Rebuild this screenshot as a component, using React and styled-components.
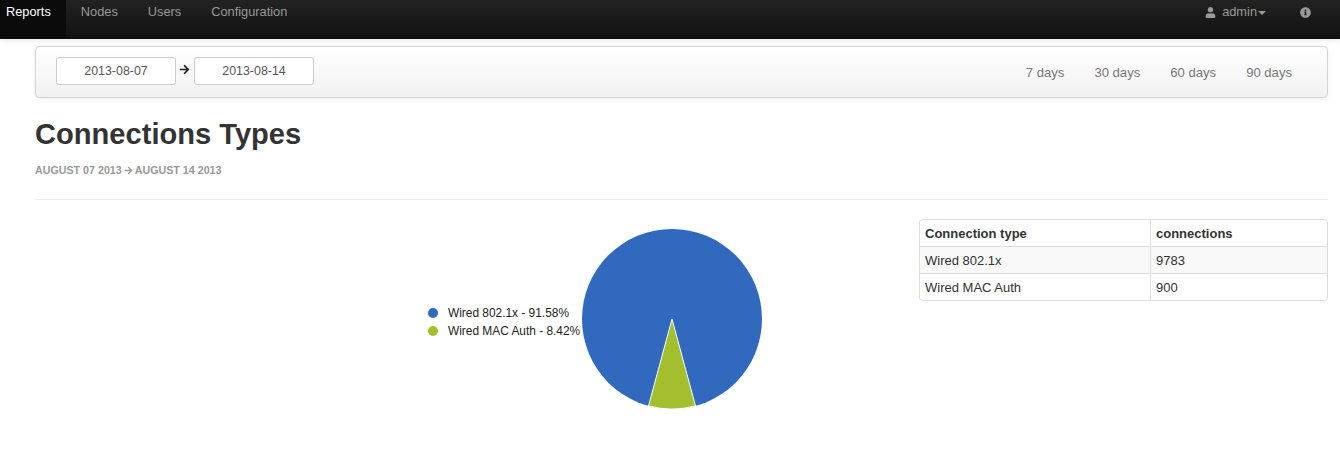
import styled, { createGlobalStyle } from 'styled-components';
import { FaUser, FaInfoCircle, FaArrowRight } from 'react-icons/fa';

const Global = createGlobalStyle`
  html, body {
    margin: 0;
    padding: 0;
    background: #fff;
    font-family: "Liberation Sans", Arial, sans-serif;
    font-size: 13px;
    color: #333;
  }
`

const Navbar = styled.div`
  display: flex;
  justify-content: space-between;
  height: 38px;
  background: linear-gradient(to bottom, #222222, #111111);
  border-bottom: 1px solid #0c0c0c;
  box-shadow: 0 1px 6px rgba(0, 0, 0, 0.1);
`

const NavGroup = styled.div`
  display: flex;
`

const NavLink = styled.a`
  display: flex;
  align-items: flex-start;
  gap: ${(p) => p.$gap || 0}px;
  padding: 4px ${(p) => p.$right || 15}px 0 ${(p) => p.$left || 15}px;
  height: 34px;
  line-height: 16px;
  font-size: 12.8px;
  color: ${(p) => (p.$active ? '#fff' : '#999')};
  background: ${(p) => (p.$active ? '#0b0b0b' : 'transparent')};
`

const NavIcon = styled.span`
  display: flex;
  height: 16px;
  align-items: center;
  font-size: 11px;
  color: #999;
`

const Caret = styled.span`
  width: 0;
  height: 0;
  margin: 7px 0 0 -5px;
  border-left: 4px solid transparent;
  border-right: 4px solid transparent;
  border-top: 4px solid #999;
`

const Page = styled.div`
  padding: 7px 12px 0 35px;
`

const Toolbar = styled.div`
  display: flex;
  align-items: center;
  justify-content: space-between;
  height: 50px;
  padding: 0 35px 0 20px;
  border: 1px solid #d4d4d4;
  border-radius: 4px;
  background: linear-gradient(to bottom, #ffffff, #f2f2f2);
  box-shadow: 0 1px 4px rgba(0, 0, 0, 0.065);
`

const DateRange = styled.div`
  display: flex;
  align-items: center;
  gap: 3px;
  margin-top: -2px;
`

const DateInput = styled.div`
  box-sizing: border-box;
  width: 120px;
  height: 28px;
  line-height: 27px;
  text-align: center;
  font-size: 12.4px;
  color: #555;
  background: #fff;
  border: 1px solid #ccc;
  border-radius: 3px;
`

const ArrowIcon = styled.span`
  display: flex;
  margin: -3px 1px 0 0;
  font-size: 11px;
  color: #222;
`

const Presets = styled.div`
  display: flex;
  gap: 30px;
`

const Preset = styled.a`
  font-size: 13.1px;
  color: #777;
`

const Title = styled.h1`
  margin: 19px 0 0;
  font-size: 29.1px;
  line-height: 34px;
  font-weight: bold;
  color: #333;
`

const Subtitle = styled.div`
  display: flex;
  align-items: center;
  gap: 2px;
  margin-top: 12px;
  font-size: 10.7px;
  line-height: 14px;
  font-weight: bold;
  color: #999;
  text-transform: uppercase;
`

const Divider = styled.hr`
  margin: 22px 0 19px;
  border: 0;
  border-top: 1px solid #eee;
`

const Row = styled.div`
  display: flex;
  justify-content: space-between;
`

const Chart = styled.div`
  display: flex;
  align-items: center;
  gap: 1px;
  margin: 9px 0 0 393px;
`

const Legend = styled.div`
  display: flex;
  flex-direction: column;
  gap: 4px;
  margin-top: 5px;
`

const LegendItem = styled.div`
  display: flex;
  align-items: center;
  gap: 10px;
  font-size: 11.9px;
  line-height: 14px;
  color: #222;
`

const Dot = styled.span`
  width: 10px;
  height: 10px;
  border-radius: 50%;
  background: ${(p) => p.$color};
`

const Table = styled.table`
  box-sizing: border-box;
  width: 409px;
  height: 82px;
  border-collapse: separate;
  border-spacing: 0;
  table-layout: fixed;
  border: 1px solid #ddd;
  border-radius: 4px;
  font-size: 13px;
`

const Cell = styled.td`
  padding: 0 5px;
  height: 26px;
  width: ${(p) => (p.$second ? 'auto' : '220px')};
  color: #333;
  font-weight: ${(p) => (p.$head ? 'bold' : 'normal')};
  background: ${(p) => (p.$striped ? '#f9f9f9' : 'transparent')};
  border-top: ${(p) => (p.$head ? '0' : '1px solid #ddd')};
  border-left: ${(p) => (p.$second ? '1px solid #ddd' : '0')};
`

const rows = [
  ['Wired 802.1x', '9783'],
  ['Wired MAC Auth', '900'],
]

export default function App() {
  return (
    <>
      <Global />
      <Navbar>
        <NavGroup>
          <NavLink $active $left={6}>Reports</NavLink>
          <NavLink>Nodes</NavLink>
          <NavLink>Users</NavLink>
          <NavLink>Configuration</NavLink>
        </NavGroup>
        <NavGroup>
          <NavLink $gap={6}>
            <NavIcon><FaUser /></NavIcon>
            <span>admin</span>
            <Caret />
          </NavLink>
          <NavLink $left={19} $right={29}>
            <NavIcon><FaInfoCircle /></NavIcon>
          </NavLink>
        </NavGroup>
      </Navbar>
      <Page>
        <Toolbar>
          <DateRange>
            <DateInput>2013-08-07</DateInput>
            <ArrowIcon><FaArrowRight /></ArrowIcon>
            <DateInput>2013-08-14</DateInput>
          </DateRange>
          <Presets>
            <Preset>7 days</Preset>
            <Preset>30 days</Preset>
            <Preset>60 days</Preset>
            <Preset>90 days</Preset>
          </Presets>
        </Toolbar>
        <Title>Connections Types</Title>
        <Subtitle>
          August 07 2013 <FaArrowRight size={9} /> August 14 2013
        </Subtitle>
        <Divider />
        <Row>
          <Chart>
            <Legend>
              <LegendItem><Dot $color="#3169bf" />Wired 802.1x - 91.58%</LegendItem>
              <LegendItem><Dot $color="#a3bf2d" />Wired MAC Auth - 8.42%</LegendItem>
            </Legend>
            <svg width="182" height="182" viewBox="0 0 182 182">
              <circle cx="91" cy="91" r="90" fill="#3169bf" />
              <path d="M91 91 L67.5 177.9 A90 90 0 0 0 114.5 177.9 Z" fill="#a3bf2d" stroke="#fff" strokeWidth="1" strokeLinejoin="round" />
            </svg>
          </Chart>
          <Table>
            <tbody>
              <tr>
                <Cell $head>Connection type</Cell>
                <Cell $head $second>connections</Cell>
              </tr>
              {rows.map(([name, count], i) => (
                <tr key={name}>
                  <Cell $striped={i === 0}>{name}</Cell>
                  <Cell $striped={i === 0} $second>{count}</Cell>
                </tr>
              ))}
            </tbody>
          </Table>
        </Row>
      </Page>
    </>
  )
}
